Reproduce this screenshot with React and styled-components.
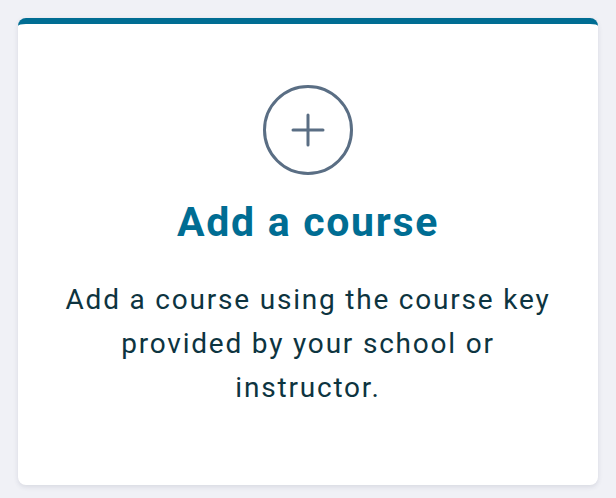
import React from 'react'
import styled, { createGlobalStyle } from 'styled-components'

const GlobalStyle = createGlobalStyle`
    html, body {
        margin: 0;
        background-color: #f0f1f6;
        font-family: Roboto, "Liberation Sans", sans-serif;
    }
`
const Page = styled.div`
    padding: 18px;
    width: 616px;
    height: 498px;
    box-sizing: border-box;
`
const Card = styled.div`
    height: 467px;
    box-sizing: border-box;
    background-color: #fff;
    border-top: 6px solid #006d93;
    border-radius: 8px;
    box-shadow: 0 2px 5px rgba(40, 50, 80, 0.12);
    display: flex;
    flex-direction: column;
    align-items: center;
    padding: 61px 24px 0;
    text-align: center;
`
const IconCircle = styled.div`
    width: 90px;
    height: 90px;
    box-sizing: border-box;
    border: 3px solid #5a6e84;
    border-radius: 50%;
    display: flex;
    align-items: center;
    justify-content: center;
    color: #5a6e84;
`
const Title = styled.h2`
    margin: 23px 0 0;
    font-size: 41px;
    line-height: 48px;
    font-weight: 700;
    letter-spacing: 1.7px;
    color: #006d93;
`
const Description = styled.p`
    margin: 32px 0 0;
    max-width: 500px;
    font-size: 28px;
    line-height: 44px;
    letter-spacing: 1.8px;
    color: #0d3440;
`

const App = () => {
    return (
        <Page>
            <GlobalStyle />
            <Card>
                <IconCircle>
                    <svg width="34" height="34" viewBox="0 0 34 34" fill="none" stroke="currentColor" strokeWidth="3" strokeLinecap="round">
                        <path d="M17 2v30M2 17h30" />
                    </svg>
                </IconCircle>
                <Title>Add a course</Title>
                <Description>
                    Add a course using the course key provided by your school or instructor.
                </Description>
            </Card>
        </Page>
    )
}

export default App
